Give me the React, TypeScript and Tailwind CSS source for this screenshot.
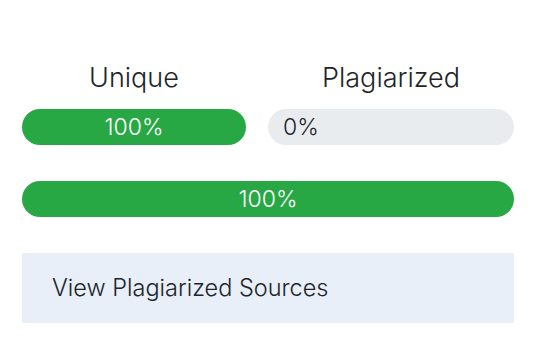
import React from 'react';

const App: React.FC = () => {
  return (
    <div className="w-[536px] h-[356px] bg-white font-['Inter',sans-serif] text-[#212529] px-[22px] pt-[60px]">
      {/* Unique / Plagiarized */}
      <div className="flex gap-[22px]">
        <div className="w-[224px] flex flex-col items-center">
          <div className="text-[27px] font-light leading-[36px]">Unique</div>
          <div className="mt-[13px] w-full h-[36px] rounded-full bg-[#28a745] text-white text-[23px] font-light flex items-center justify-center">
            100%
          </div>
        </div>
        <div className="w-[246px] flex flex-col items-center">
          <div className="text-[27px] font-light leading-[36px]">Plagiarized</div>
          <div className="mt-[13px] w-full h-[36px] rounded-full bg-[#e9ecef] text-[23px] font-light flex items-center px-[15px]">
            0%
          </div>
        </div>
      </div>

      {/* Overall */}
      <div className="mt-[36px] h-[36px] rounded-full bg-[#28a745] text-white text-[23px] font-light flex items-center justify-center">
        100%
      </div>

      {/* Sources */}
      <div className="mt-[36px] h-[70px] bg-[#e8eff8] flex items-center px-[30px] text-[23.5px] font-light">
        View Plagiarized Sources
      </div>
    </div>
  );
};

export default App;
